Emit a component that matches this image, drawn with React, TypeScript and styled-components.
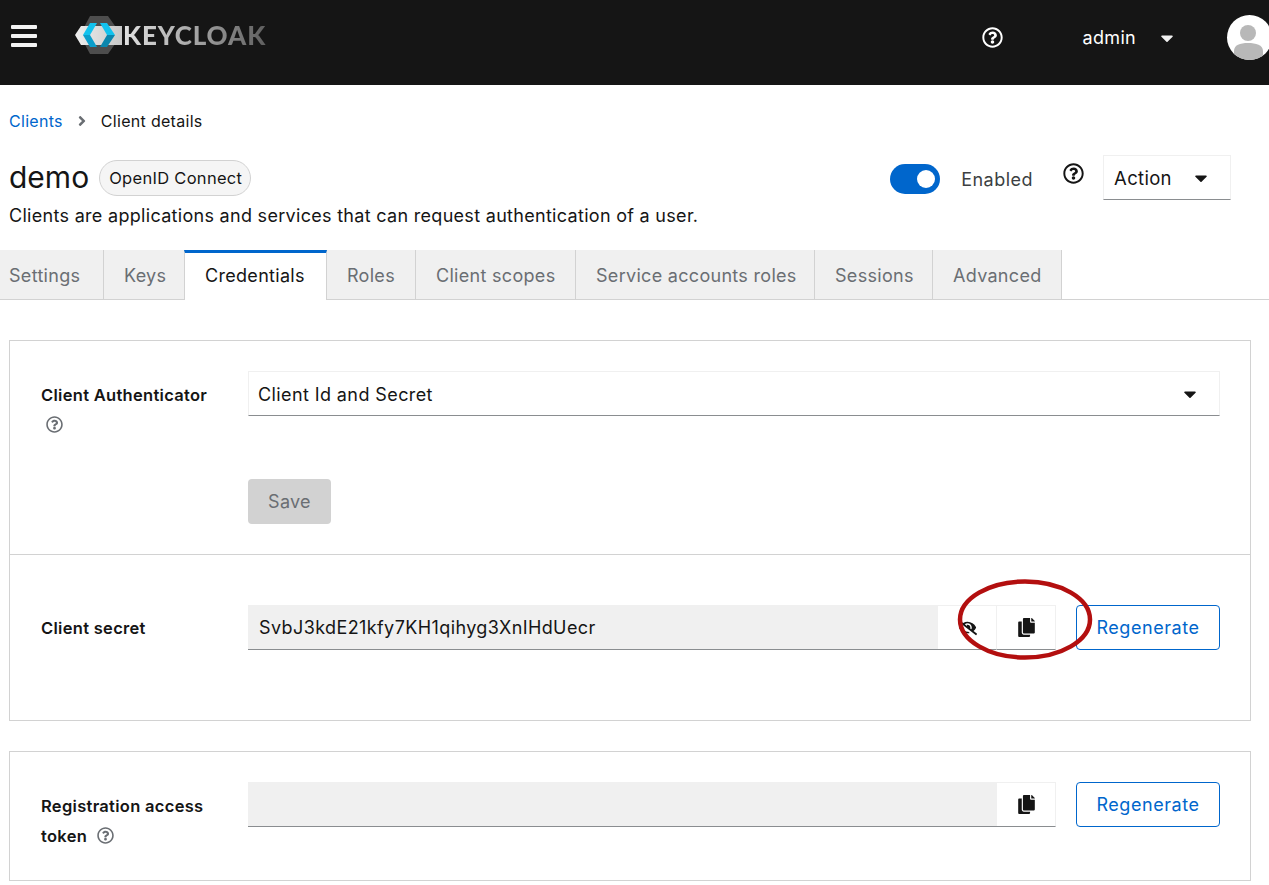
import { FC, ReactNode } from "react";
import styled, { createGlobalStyle } from "styled-components";
import {
  FaAngleRight,
  FaCaretDown,
  FaCopy,
  FaEyeSlash,
  FaRegQuestionCircle,
} from "react-icons/fa";

const GlobalStyle = createGlobalStyle`
  html, body {
    margin: 0;
    padding: 0;
    background: #fff;
    overflow: hidden;
  }
  * {
    box-sizing: border-box;
  }
`;

const Page = styled.div`
  position: relative;
  width: 1269px;
  height: 885px;
  overflow: hidden;
  font-family: "Inter", "Liberation Sans", sans-serif;
  font-size: 18px;
  letter-spacing: 0.3px;
  color: #151515;
`;

const Header = styled.header`
  display: flex;
  align-items: flex-start;
  height: 85px;
  background: #151515;
  color: #fff;
`;

const Burger = styled.div`
  display: grid;
  gap: 5px;
  width: 26px;
  margin: 25px 38px 0 11px;

  & > span {
    height: 4px;
    background: #f4f4f4;
    border-radius: 1px;
  }
`;

const Logo = styled.div`
  display: flex;
  align-items: center;
  height: 38px;
  margin-top: 16px;
`;

const LogoText = styled.span`
  font-family: "Lato", sans-serif;
  font-weight: 900;
  font-size: 26px;
  line-height: 38px;
  letter-spacing: 0.9px;
  background: linear-gradient(90deg, #e2e2e2 0%, #a5a5a5 50%, #5f5f5f 100%);
  -webkit-background-clip: text;
  background-clip: text;
  color: transparent;
`;

const HeaderHelp = styled.div`
  display: flex;
  margin: 27px 0 0 auto;
  font-size: 21px;
  color: #fff;
`;

const UserName = styled.div`
  margin: 26px 0 0 80px;
  font-size: 18px;
  line-height: 24px;
`;

const UserCaret = styled.div`
  display: flex;
  margin: 28px 0 0 21px;
  font-size: 20px;
  color: #f0f0f0;
`;

const Avatar = styled.div`
  flex: none;
  width: 45px;
  height: 45px;
  margin: 15px -3px 0 50px;
  border-radius: 50%;
  background: #fff;
  overflow: hidden;
`;

const Breadcrumb = styled.nav`
  display: flex;
  align-items: center;
  height: 24px;
  margin: 24px 0 0 9px;
  font-size: 16px;
  line-height: 24px;
`;

const CrumbLink = styled.a`
  color: #0066cc;
  text-decoration: none;
`;

const CrumbSeparator = styled.span`
  display: flex;
  margin: 0 11px 0 11px;
  font-size: 16px;
  color: #6a6e73;
`;

const TitleBar = styled.div`
  display: flex;
  margin-top: 22px;
  height: 45px;
  padding-left: 9px;
`;

const Title = styled.h1`
  margin: 4px 10px 0 0;
  font-size: 30px;
  line-height: 36px;
  font-weight: 400;
  letter-spacing: 0;
`;

const Chip = styled.span`
  display: flex;
  align-items: center;
  width: 152px;
  height: 36px;
  margin-top: 5px;
  padding-left: 9px;
  border: 1px solid #d2d2d2;
  border-radius: 18px;
  background: #f5f5f5;
  font-size: 16.5px;
  white-space: nowrap;
`;

const Toggle = styled.div`
  position: relative;
  width: 50px;
  height: 30px;
  margin: 9px 0 0 639px;
  border-radius: 15px;
  background: #0066cc;

  &::after {
    content: "";
    position: absolute;
    top: 6px;
    right: 5px;
    width: 18px;
    height: 18px;
    border-radius: 50%;
    background: #fff;
  }
`;

const ToggleLabel = styled.span`
  margin: 13px 0 0 21px;
  line-height: 24px;
  letter-spacing: 0.5px;
  color: #3c3f42;
`;

const TitleHelp = styled.div`
  display: flex;
  margin: 8px 0 0 30px;
  font-size: 21px;
`;

const ActionSelect = styled.div`
  display: flex;
  align-items: center;
  justify-content: space-between;
  width: 128px;
  height: 45px;
  margin-left: 19px;
  padding: 0 19px 0 10px;
  border: 1px solid #f0f0f0;
  border-bottom-color: #8a8d90;
  font-size: 18.5px;
`;

const Description = styled.p`
  margin: 3px 0 0 9px;
  line-height: 26px;
  white-space: nowrap;
`;

const Tabs = styled.div`
  display: flex;
  height: 50px;
  margin-top: 21px;
  border-bottom: 1px solid #d2d2d2;
`;

const Tab = styled.div<{ $width: number; $active?: boolean; $first?: boolean }>`
  display: flex;
  align-items: center;
  flex: none;
  width: ${(props) => props.$width}px;
  height: ${(props) => (props.$active ? "50px" : "49px")};
  padding-left: ${(props) => (props.$first ? "9px" : "20px")};
  padding-top: ${(props) => (props.$active ? "0" : "1px")};
  padding-bottom: ${(props) => (props.$active ? "3px" : "0")};
  border-right: 1px solid #d2d2d2;
  background: ${(props) => (props.$active ? "#fff" : "#f0f0f0")};
  color: ${(props) => (props.$active ? "#151515" : "#6a6e73")};
  border-top: ${(props) => (props.$active ? "3px solid #0066cc" : "none")};
  border-left: ${(props) => (props.$active ? "1px solid #d2d2d2" : "none")};
  margin-left: ${(props) => (props.$active ? "-1px" : "0")};
  white-space: nowrap;
`;

const Content = styled.main`
  display: grid;
  gap: 30px;
  margin: 40px 18px 0 9px;
`;

const Card = styled.section`
  border: 1px solid #d2d2d2;
`;

const Row = styled.div<{ $height: number; $divided?: boolean }>`
  display: grid;
  grid-template-columns: 207px 972px;
  align-content: start;
  height: ${(props) => props.$height}px;
  padding: 30px 0 0 31px;
  border-top: ${(props) => (props.$divided ? "1px solid #d2d2d2" : "none")};
`;

const Label = styled.div<{ $top: number }>`
  margin-top: ${(props) => props.$top}px;
  font-size: 16.5px;
  font-weight: 600;
  line-height: 30px;
  white-space: nowrap;
`;

const LabelHelp = styled.span`
  display: inline-flex;
  vertical-align: -2px;
  margin-left: 10px;
  font-size: 17px;
  color: #6a6e73;
`;

const LabelHelpBelow = styled(LabelHelp)`
  display: flex;
  margin: 0 0 0 5px;
  padding-top: 6px;
`;

const FieldColumn = styled.div<{ $top?: number }>`
  margin-top: ${(props) => props.$top ?? 0}px;
`;

const SelectBox = styled.div`
  display: flex;
  align-items: center;
  justify-content: space-between;
  height: 45px;
  padding: 1px 19px 0 9px;
  border: 1px solid #f0f0f0;
  border-bottom-color: #8a8d90;
  letter-spacing: 0.4px;
`;

const SaveButton = styled.button`
  display: block;
  width: 83px;
  height: 45px;
  margin-top: 63px;
  border: none;
  border-radius: 4px;
  background: #d2d2d2;
  color: #6a6e73;
  font: inherit;
  letter-spacing: inherit;
`;

const FieldGroup = styled.div`
  display: flex;
  align-items: stretch;
  height: 45px;
`;

const ReadOnlyInput = styled.div`
  flex: 1;
  display: flex;
  align-items: center;
  padding-left: 11px;
  background: #f0f0f0;
  border-bottom: 1px solid #8a8d90;
  font-size: 18px;
  letter-spacing: 0.4px;
  white-space: nowrap;
`;

const IconButton = styled.div`
  flex: none;
  display: flex;
  align-items: center;
  justify-content: center;
  width: 59px;
  border: 1px solid #f0f0f0;
  border-left: none;
  border-bottom-color: #8a8d90;
  font-size: 19px;
`;

const OutlineButton = styled.button`
  flex: none;
  width: 144px;
  margin-left: 20px;
  border: 1px solid #0066cc;
  border-radius: 4px;
  background: #fff;
  color: #0066cc;
  font: inherit;
  letter-spacing: 0.55px;
`;

const Annotation = styled.svg`
  position: absolute;
  left: 950px;
  top: 572px;
  pointer-events: none;
`;

const tabs: Array<[string, number]> = [
  ["Settings", 104],
  ["Keys", 81],
  ["Credentials", 143],
  ["Roles", 89],
  ["Client scopes", 160],
  ["Service accounts roles", 239],
  ["Sessions", 118],
  ["Advanced", 129],
];

const SecretField: FC<{ value?: string; children?: ReactNode }> = (props) => (
  <FieldGroup>
    <ReadOnlyInput>{props.value}</ReadOnlyInput>
    {props.children}
    <IconButton>
      <FaCopy />
    </IconButton>
    <OutlineButton>Regenerate</OutlineButton>
  </FieldGroup>
);

const App: FC = () => {
  return (
    <Page>
      <GlobalStyle />
      <Header>
        <Burger>
          <span />
          <span />
          <span />
        </Burger>
        <Logo>
          <svg width="48" height="38" viewBox="0 0 48 38">
            <defs>
              <linearGradient id="band" x1="0" x2="1" y1="0" y2="0">
                <stop offset="0" stopColor="#eeeeee" />
                <stop offset="1" stopColor="#c8c8c8" />
              </linearGradient>
            </defs>
            <polygon points="5,19 15,0 33,0 40,10 40,28 33,38 15,38" fill="#4d4d4d" />
            <polygon points="0,19 6,10 47,10 47,29 6,29" fill="url(#band)" />
            <polygon points="15,7 22,7 15,19 8,19" fill="#12c2ee" />
            <polygon points="8,19 15,19 22,31 15,31" fill="#0b9ecb" />
            <polygon points="25,7 32,7 40,19 32,19" fill="#12c2ee" />
            <polygon points="32,19 40,19 32,31 25,31" fill="#0b86ad" />
          </svg>
          <LogoText>KEYCLOAK</LogoText>
        </Logo>
        <HeaderHelp>
          <FaRegQuestionCircle />
        </HeaderHelp>
        <UserName>admin</UserName>
        <UserCaret>
          <FaCaretDown />
        </UserCaret>
        <Avatar>
          <svg width="45" height="45" viewBox="0 0 45 45">
            <circle cx="21" cy="18" r="8" fill="#b8b8b8" />
            <path d="M7 45 V36 C7 30 13 28 21 28 C29 28 36 30 36 36 V45 Z" fill="#b8b8b8" />
          </svg>
        </Avatar>
      </Header>

      <Breadcrumb>
        <CrumbLink href="#">Clients</CrumbLink>
        <CrumbSeparator>
          <FaAngleRight />
        </CrumbSeparator>
        <span>Client details</span>
      </Breadcrumb>

      <TitleBar>
        <Title>demo</Title>
        <Chip>OpenID Connect</Chip>
        <Toggle />
        <ToggleLabel>Enabled</ToggleLabel>
        <TitleHelp>
          <FaRegQuestionCircle />
        </TitleHelp>
        <ActionSelect>
          Action
          <FaCaretDown size={20} />
        </ActionSelect>
      </TitleBar>
      <Description>
        Clients are applications and services that can request authentication of
        a user.
      </Description>

      <Tabs>
        {tabs.map(([name, width], index) => (
          <Tab
            key={name}
            $width={width}
            $first={index === 0}
            $active={name === "Credentials"}
          >
            {name}
          </Tab>
        ))}
      </Tabs>

      <Content>
        <Card>
          <Row $height={213}>
            <Label $top={9}>
              Client Authenticator
              <LabelHelpBelow>
                <FaRegQuestionCircle />
              </LabelHelpBelow>
            </Label>
            <FieldColumn>
              <SelectBox>
                Client Id and Secret
                <FaCaretDown size={20} />
              </SelectBox>
              <SaveButton>Save</SaveButton>
            </FieldColumn>
          </Row>
          <Row $height={166} $divided>
            <Label $top={28}>Client secret</Label>
            <FieldColumn $top={20}>
              <SecretField value="SvbJ3kdE21kfy7KH1qihyg3XnIHdUecr">
                <IconButton>
                  <FaEyeSlash />
                </IconButton>
              </SecretField>
            </FieldColumn>
          </Row>
        </Card>
        <Card>
          <Row $height={128}>
            <Label $top={9}>
              Registration access
              <br />
              token
              <LabelHelp>
                <FaRegQuestionCircle />
              </LabelHelp>
            </Label>
            <SecretField />
          </Row>
        </Card>
      </Content>

      <Annotation width="150" height="96" viewBox="0 0 150 96">
        <ellipse
          cx="75"
          cy="47.5"
          rx="65"
          ry="38"
          fill="none"
          stroke="#b30f0f"
          strokeWidth="4.5"
        />
      </Annotation>
    </Page>
  );
};

export default App;
